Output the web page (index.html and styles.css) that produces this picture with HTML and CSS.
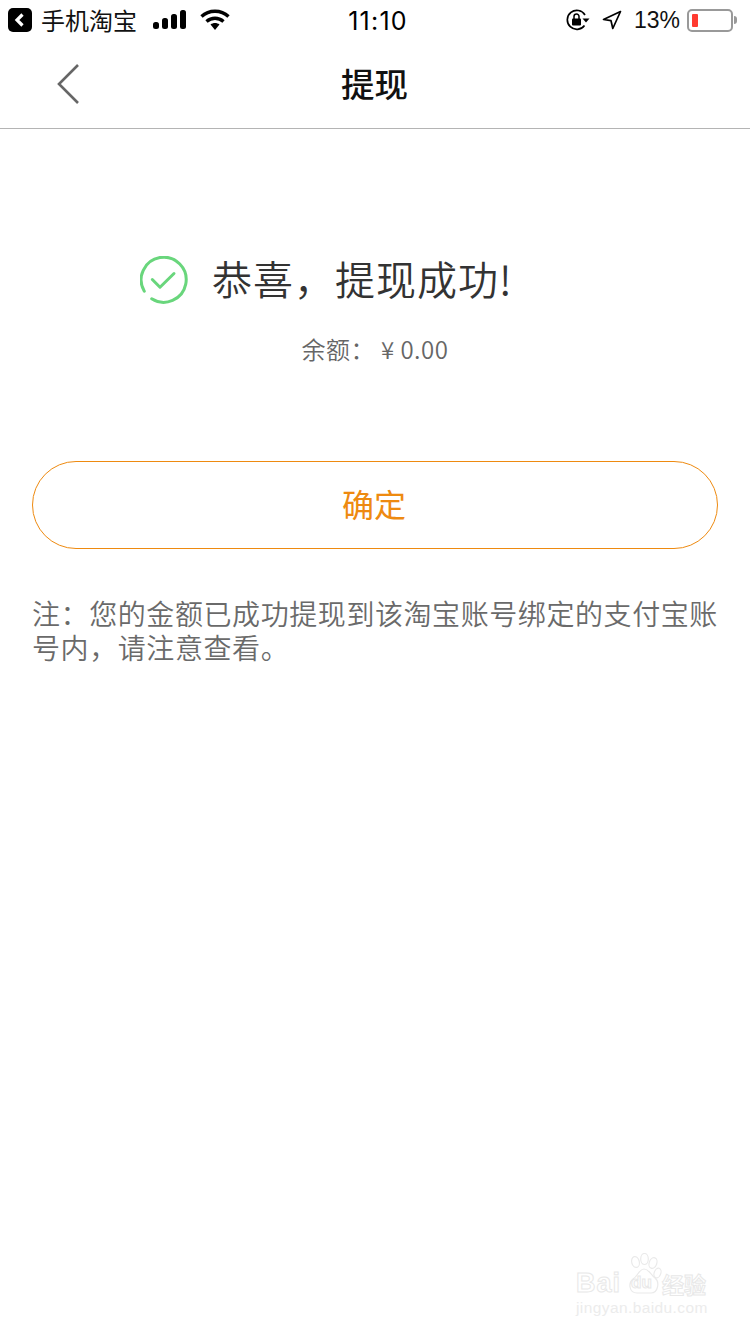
FILE: index.html
```
<!DOCTYPE html>
<html lang="zh">
<head>
<meta charset="utf-8">
<title>提现</title>
<link rel="stylesheet" href="styles.css">
</head>
<body>
<div class="page">
  <header class="status">
    <div class="status-left">
      <svg class="back-app" viewBox="0 0 24 24" width="24" height="24"><rect width="24" height="24" rx="5" fill="#000"/><path d="M14.5 6.500 9 12l5.500 5.500" fill="none" stroke="#fff" stroke-width="3.200"/></svg>
      <span class="app-name">手机淘宝</span>
      <svg class="signal" viewBox="0 0 34 20" width="34" height="20"><rect x="0" y="12" width="6" height="7" rx="2.500"/><rect x="9" y="8" width="6" height="11" rx="2.500"/><rect x="18" y="4" width="6" height="15" rx="2.500"/><rect x="27" y="0" width="6" height="19" rx="2.500"/></svg>
      <svg class="wifi" viewBox="0 0 30 22" width="30" height="22"><path d="M1.500 7.500C9 .5 21 .5 28.500 7.500" fill="none" stroke="#000" stroke-width="3.400"/><path d="M6.500 12.500c5-4.400 12-4.400 17 0" fill="none" stroke="#000" stroke-width="3.400"/><path d="M10.500 15.500c2.700-2 6.300-2 9 0L15 21z"/></svg>
    </div>
    <div class="time">11:10</div>
    <div class="status-right">
      <svg class="lock" viewBox="0 0 24 22" width="24" height="22"><path d="M18.500 16.500A9.500 9.500 0 1 1 19 6" fill="none" stroke="#000" stroke-width="1.700"/><path d="M16.500 9.500h7L20 13.500z"/><rect x="6" y="9.500" width="9" height="7" rx="1"/><path d="M8 10V7.500a2.500 2.500 0 0 1 5 0V10" fill="none" stroke="#000" stroke-width="1.500"/></svg>
      <svg class="loc" viewBox="0 0 20 20" width="20" height="20"><path d="M18.500 1.500 1.500 9.500l7.500 1.200 1.800 7.800z" fill="none" stroke="#000" stroke-width="1.700" stroke-linejoin="round"/></svg>
      <span class="pct">13%</span>
      <div class="battery"><div class="battery-body"><div class="battery-fill"></div></div><div class="battery-tip"></div></div>
    </div>
  </header>
  <nav class="nav">
    <svg class="nav-back" viewBox="0 0 24 42" width="24" height="42"><path d="M22 2 3 21l19 19" fill="none" stroke="#666" stroke-width="2.600"/></svg>
    <h1 class="nav-title">提现</h1>
  </nav>
  <main class="content">
    <div class="result">
      <svg class="ok" viewBox="0 0 48 48" width="48" height="48"><path d="M4.300 35.200A22.500 22.500 0 1 1 11.700 42.800" fill="none" stroke="#69d67c" stroke-width="3" stroke-linecap="round"/><path d="M12.300 23.500 20 31.200 34 17.500" fill="none" stroke="#69d67c" stroke-width="3" stroke-linecap="round" stroke-linejoin="round"/></svg>
      <span class="result-text">恭喜&#xFF0C;提现成功!</span>
    </div>
    <p class="balance">余额&#xFF1A; ¥ 0.00</p>
    <button class="confirm">确定</button>
    <p class="note">注&#xFF1A;您的金额已成功提现到该淘宝账号绑定的支付宝账号内&#xFF0C;请注意查看。</p>
  </main>
  <div class="watermark">
    <span class="wm-bai">Bai</span>
    <svg class="wm-paw" viewBox="0 0 34 42" width="34" height="42"><g fill="#fff" stroke="#eaeaea" stroke-width="1.200"><ellipse cx="7.500" cy="9" rx="3.800" ry="5.500" transform="rotate(-15 7.500 9)"/><ellipse cx="16.500" cy="6" rx="3.800" ry="5.500"/><ellipse cx="25" cy="10" rx="3.800" ry="5.500" transform="rotate(20 25 10)"/><ellipse cx="29.500" cy="20" rx="3.300" ry="5" transform="rotate(20 29.500 20)"/><path d="M16 16c5 0 6 5 11 9 5 4 3 15-4 15H9C1 40 0 30 5 26c5-3 6-10 11-10z"/></g></svg>
    <span class="wm-du">du</span>
    <span class="wm-jy">经验</span>
    <span class="wm-url">jingyan.baidu.com</span>
  </div>
</div>
</body>
</html>
```

FILE: styles.css
```
* { box-sizing: border-box; }
html, body { margin: 0; padding: 0; background: #fff; }
body { font-family: "Noto Sans CJK SC", "Noto Sans", sans-serif; }
.page { position: relative; width: 750px; height: 1334px; overflow: hidden; background: #fff; }

.status { position: relative; display: flex; justify-content: space-between; align-items: center; height: 40px; padding: 0 13px 0 8px; color: #000; }
.status-left { display: flex; align-items: center; }
.status-right { display: flex; align-items: center; }
.back-app { margin-right: 9px; }
.app-name { font-size: 24px; line-height: 40px; color: #111; margin-right: 16px; }
.signal { margin-right: 13px; }
.signal rect { fill: #000; }
.wifi { fill: #000; }
.time { position: absolute; left: 0; right: 0; top: 0; text-align: center; font: 25px/42px "Inter", "Liberation Sans", sans-serif; letter-spacing: 1.200px; pointer-events: none; padding-left: 6px; }
.lock { margin-right: 12px; }
.loc { margin-right: 12px; }
.pct { font: 23px/42px "Liberation Sans", sans-serif; color: #111; margin-right: 7px; }
.battery { display: flex; align-items: center; }
.battery-body { width: 46px; height: 23px; padding: 3px; border: 2px solid #999; border-radius: 5px; }
.battery-fill { width: 6px; height: 100%; background: #ff3b30; border-radius: 1px; }
.battery-tip { width: 3px; height: 8px; background: #999; border-radius: 0 3px 3px 0; margin-left: 1px; }

.nav { position: relative; display: flex; align-items: center; justify-content: center; height: 89px; border-bottom: 1px solid #b4b4b4; }
.nav-back { position: absolute; left: 56px; top: 23px; }
.nav-title { margin: -3px 0 0 -1px; font-size: 33.500px; line-height: 88px; font-weight: 500; color: #111; }

.content { padding: 0 32px; }
.result { display: flex; align-items: center; height: 72px; margin-top: 115px; padding-left: 108px; }
.ok { flex: none; margin-right: 24px; }
.result-text { margin-top: -5px; font-size: 40px; line-height: 72px; letter-spacing: 1px; color: #333; white-space: nowrap; font-weight: 350; }
.balance { margin: 15px 0 0; font-size: 24px; line-height: 36px; letter-spacing: 0.500px; color: #666; text-align: center; white-space: nowrap; font-weight: 350; }
.confirm { display: block; width: 686px; height: 88px; margin-top: 94px; padding: 0 2px 5px 0; border: 1px solid #ee8a10; border-radius: 44px; background: #fff; color: #ee8a10; font: inherit; font-size: 32px; line-height: 78px; }
.note { margin: 47px 0 0; font-size: 28px; line-height: 34px; letter-spacing: 0.580px; color: #6a6a6a; font-weight: 350; }

.watermark { position: absolute; left: 576px; top: 1253px; width: 136px; height: 66px; }
.wm-bai, .wm-du, .wm-jy { position: absolute; white-space: nowrap; color: #fff; -webkit-text-stroke: 1px #e8e8e8; }
.wm-bai { left: 0; top: 15px; font: 700 27px/30px "Liberation Sans", sans-serif; letter-spacing: 1px; }
.wm-paw { position: absolute; left: 52px; top: 0; }
.wm-du { left: 55px; top: 20px; font: 700 17px/20px "Liberation Sans", sans-serif; }
.wm-jy { left: 86px; top: 17px; font-size: 22px; line-height: 26px; font-weight: 700; }
.wm-url { position: absolute; left: 0; top: 45px; font: 400 15.500px/20px "Liberation Sans", sans-serif; color: #ececec; white-space: nowrap; letter-spacing: 0.400px; }
```
